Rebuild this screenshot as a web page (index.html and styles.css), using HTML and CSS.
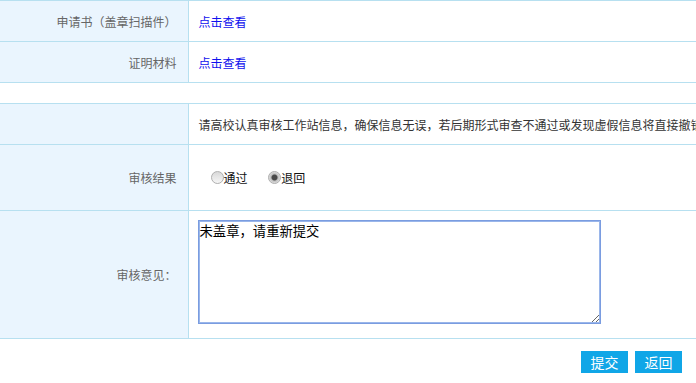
FILE: index.html
```html
<!DOCTYPE html>
<html lang="zh-CN">
  <head>
    <meta charset="UTF-8" />
    <meta name="viewport" content="width=device-width, initial-scale=1.0" />
    <title>审核</title>
    <link rel="stylesheet" href="styles.css">
  </head>
  <body>
    <table class="form-table">
      <colgroup><col class="col-label"><col></colgroup>
      <tr class="row-short">
        <td class="label">申请书（盖章扫描件）</td>
        <td class="val"><a href="#" class="link">点击查看</a></td>
      </tr>
      <tr class="row-short">
        <td class="label">证明材料</td>
        <td class="val"><a href="#" class="link">点击查看</a></td>
      </tr>
    </table>

    <table class="form-table audit">
      <colgroup><col class="col-label"><col></colgroup>
      <tr class="row-short">
        <td class="label"></td>
        <td class="val notice">请高校认真审核工作站信息，确保信息无误，若后期形式审查不通过或发现虚假信息将直接撤销工作站资格。</td>
      </tr>
      <tr class="row-radio">
        <td class="label">审核结果</td>
        <td class="val">
          <label class="opt"><input type="radio" name="result" value="1">通过</label>
          <label class="opt"><input type="radio" name="result" value="0" checked>退回</label>
        </td>
      </tr>
      <tr class="row-remark">
        <td class="label">审核意见：</td>
        <td class="val val-top">
          <textarea class="remark" id="remark">未盖章，请重新提交</textarea>
        </td>
      </tr>
    </table>

    <div class="actions">
      <button class="btn">提交</button>
      <button class="btn">返回</button>
    </div>

    <script>
      var remark = document.getElementById("remark");
      remark.focus();
      remark.setSelectionRange(remark.value.length, remark.value.length);
    </script>
  </body>
</html>
```

FILE: styles.css
```css
html, body {
  margin: 0;
  padding: 0;
  overflow: hidden;
  background: #fff;
}

body {
  font-family: "Microsoft YaHei", "Noto Sans CJK SC", sans-serif;
  font-size: 12px;
  color: #333;
}

.form-table {
  width: 100%;
  table-layout: fixed;
  border-collapse: collapse;
  border-top: 1px solid #b7e0f0;
}

.col-label {
  width: 188px;
}

.form-table td {
  border-bottom: 1px solid #b7e0f0;
  padding: 0;
}

.form-table .label {
  background-color: #eaf5fe;
  color: #666;
  text-align: right;
  padding-right: 11px;
  border-right: 1px solid #b7e0f0;
}

.form-table .val {
  padding-left: 10px;
  white-space: nowrap;
  overflow: hidden;
}

.row-short td {
  height: 40px;
}

.row-radio td {
  height: 65px;
}

.row-remark td {
  height: 127px;
}

.form-table .val-top {
  vertical-align: top;
  padding-top: 9px;
  height: 118px;
}

.audit {
  margin-top: 20px;
}

.link {
  color: #1010ee;
  text-decoration: none;
}

.notice {
  color: #333;
}

.opt {
  display: inline-flex;
  align-items: center;
  color: #111;
  margin-left: 12px;
  margin-right: 6px;
}

.opt input {
  -webkit-appearance: none;
  appearance: none;
  width: 13px;
  height: 13px;
  margin: 0;
  border: 1px solid #b0b0b0;
  border-radius: 50%;
  background: linear-gradient(#d8d8d8, #f6f6f6);
  box-sizing: border-box;
}

.opt input:checked {
  background: radial-gradient(circle, #4a4a4a 0, #4a4a4a 2.5px, #bdbdbd 3.5px, #e4e4e4 6px);
}

.remark {
  display: block;
  width: 403px;
  height: 104px;
  margin-left: -1px;
  padding: 0 1px;
  box-sizing: border-box;
  border: 1px solid #7a9ce0;
  box-shadow: inset 0 0 0 1px #9ab6ea;
  outline: none;
  font-family: "Microsoft YaHei", "Noto Sans CJK SC", sans-serif;
  font-size: 13.33px;
  color: #000;
}

.actions {
  display: flex;
  justify-content: flex-end;
  gap: 7px;
  padding: 12px 14px 0 0;
}

.btn {
  width: 47px;
  height: 22px;
  padding: 0;
  border: none;
  background-color: #10a6e7;
  color: #fff;
  font-family: "Microsoft YaHei", "Noto Sans CJK SC", sans-serif;
  font-size: 14px;
  cursor: pointer;
}
```
